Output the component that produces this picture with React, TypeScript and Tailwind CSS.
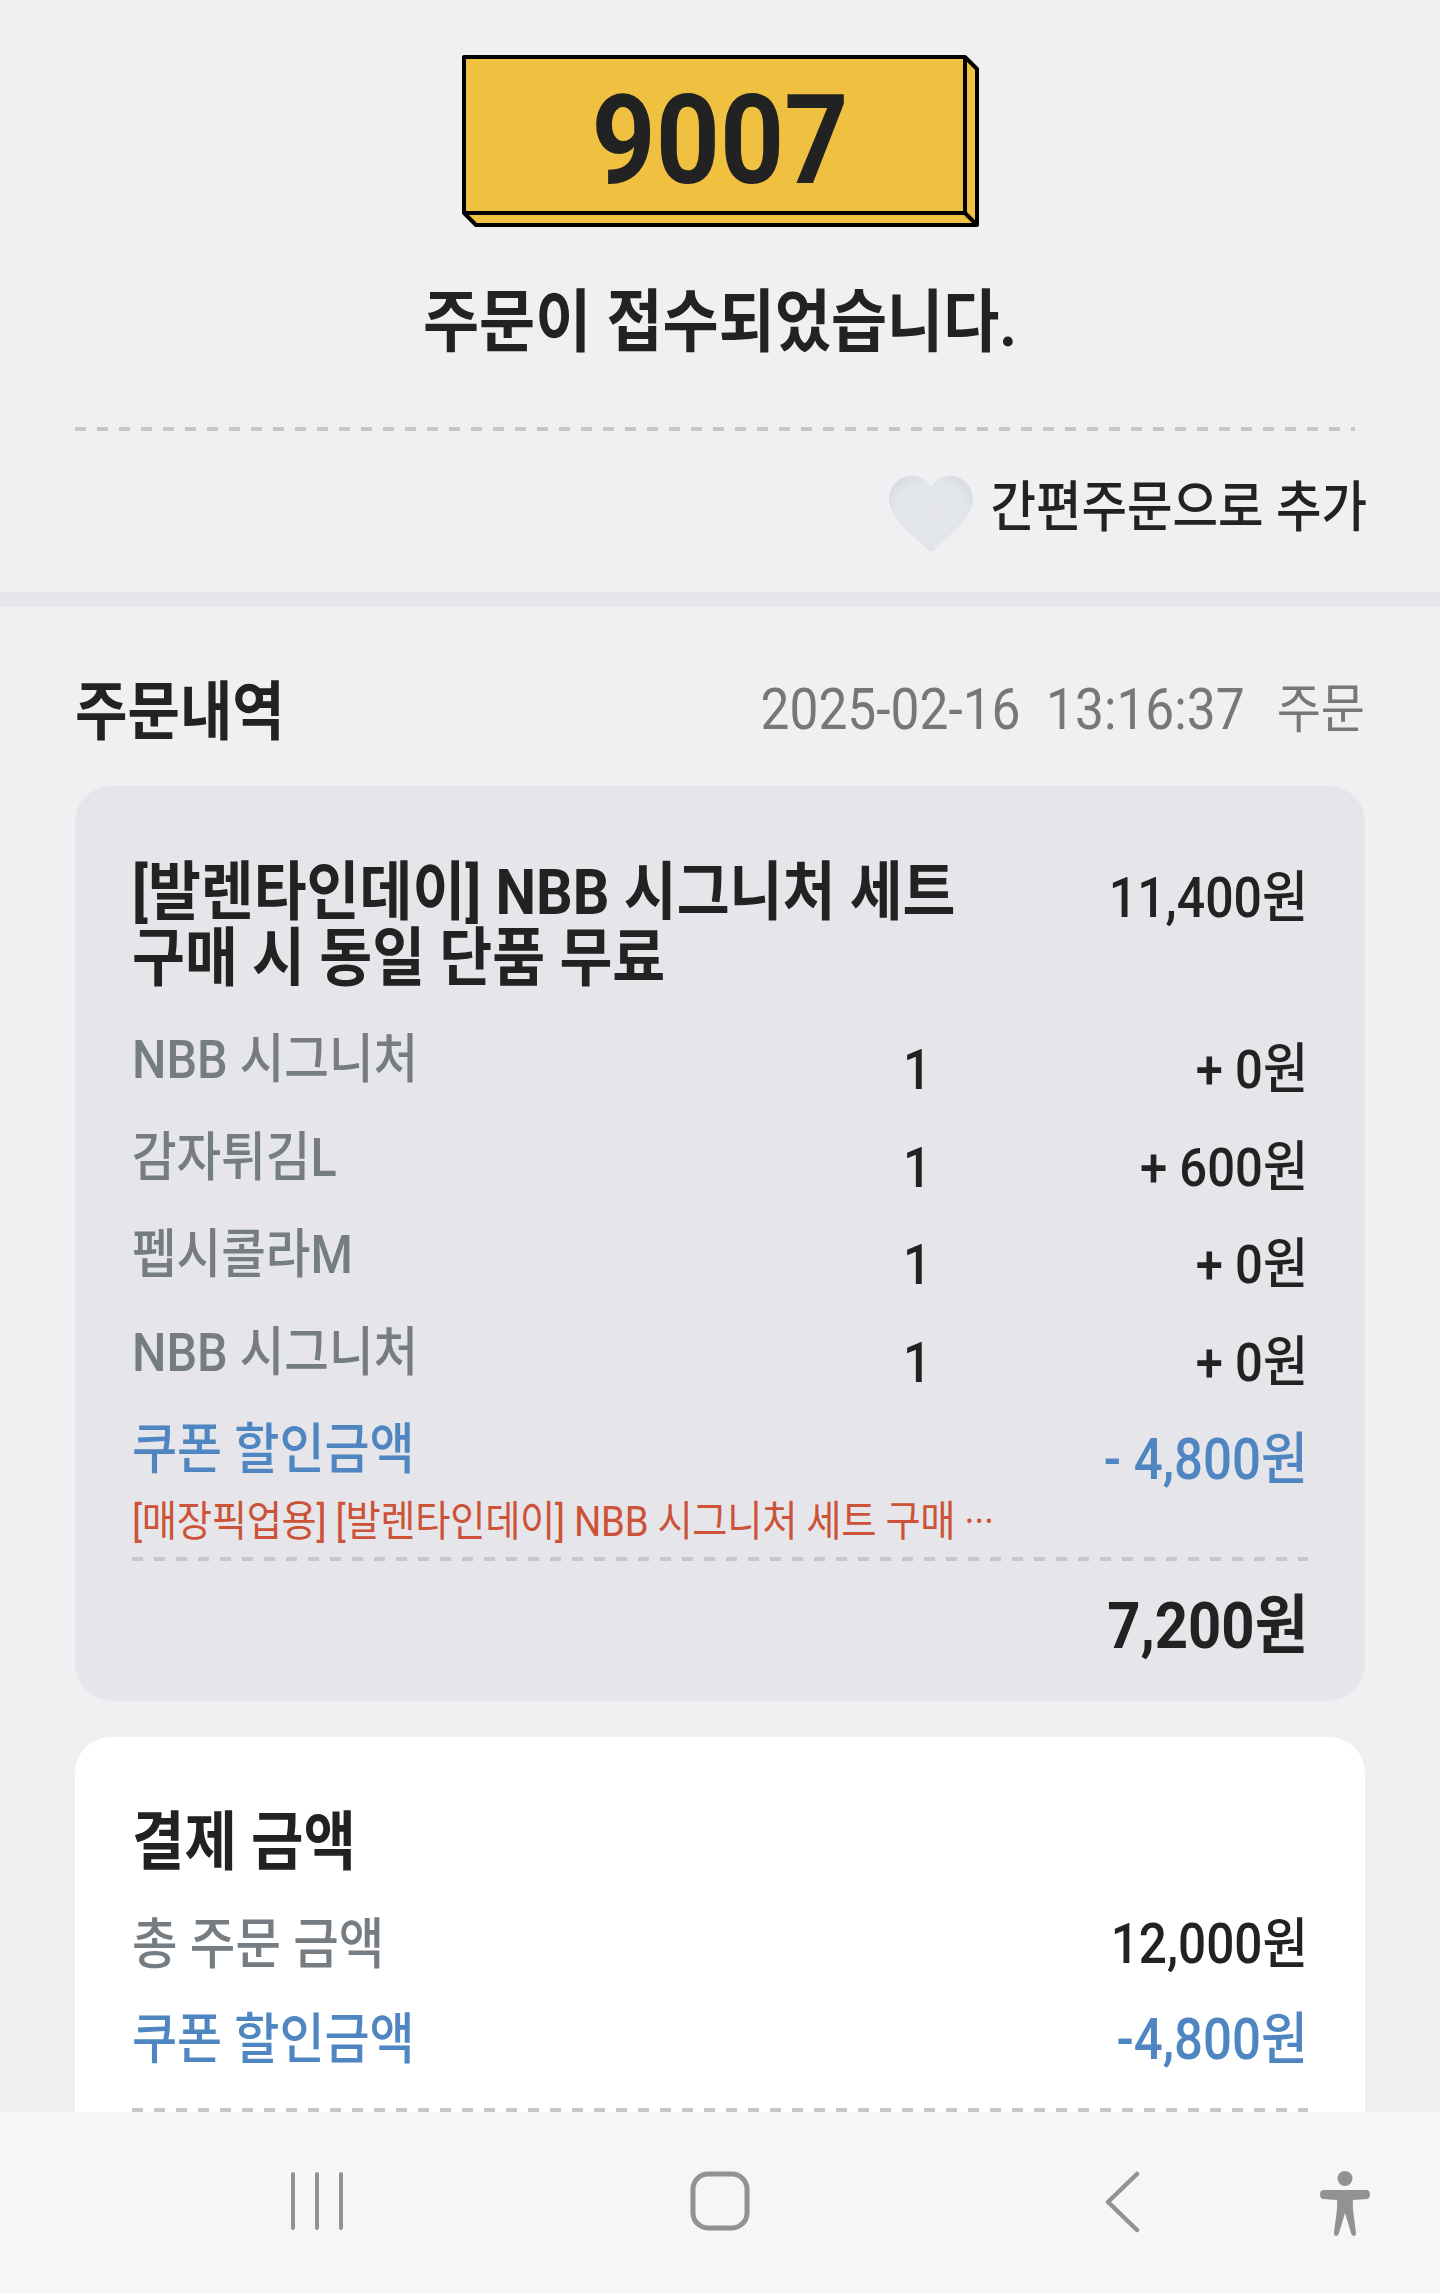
import React from 'react';

const tall = 'inline-block origin-center scale-y-[1.11] whitespace-nowrap';
const dashed = 'h-1 bg-[repeating-linear-gradient(90deg,#c6c6c6_0_11px,transparent_11px_22px)]';

const options = [
  { name: 'NBB 시그니처', qty: 1, price: '+ 0원' },
  { name: '감자튀김L', qty: 1, price: '+ 600원' },
  { name: '펩시콜라M', qty: 1, price: '+ 0원' },
  { name: 'NBB 시그니처', qty: 1, price: '+ 0원' },
];

const OptionRow: React.FC<{ name: string; qty: number; price: string }> = ({ name, qty, price }) => (
  <div className="flex h-[97.5px] items-start text-[49px] leading-[60px] font-medium">
    <span className={`${tall} w-[771px] text-[#757c82] text-[48.5px]`}>{name}</span>
    <span className={`${tall} mt-[10px] w-[60px] text-[#222] text-[50px]`}>{qty}</span>
    <span className={`${tall} mt-[10px] flex-1 text-right text-[#222]`}>{price}</span>
  </div>
);

const Plate = () => (
  <div className="relative mx-auto flex h-[172px] w-[517px] items-center">
    <svg className="absolute inset-0" width="517" height="172" viewBox="0 0 517 172" fill="none">
      <path d="M2 2H503L515 14V170H14L2 158Z" fill="#f0c040" stroke="#000" strokeWidth="4" strokeLinejoin="round" />
      <path d="M2 158H503V2M503 158L515 170" stroke="#000" strokeWidth="4" strokeLinejoin="round" />
    </svg>
    <div className="relative w-full text-center">
      <span className={`${tall} text-[112px] leading-[120px] font-bold text-[#222]`}>9007</span>
    </div>
  </div>
);

const Heart = () => (
  <svg width="84" height="76" viewBox="0 0 84 76">
    <defs>
      <radialGradient id="heartFill" cx="50%" cy="50%" r="62%">
        <stop offset="0%" stopColor="#e4e6eb" />
        <stop offset="70%" stopColor="#e2e5ea" />
        <stop offset="100%" stopColor="#d5d9e0" />
      </radialGradient>
    </defs>
    <path
      d="M42 75C40 75 38 73 36 71C22 58 1 42 0 24C0 10 10 0 23 0C31 0 38 4 42 11C46 4 53 0 61 0C74 0 84 10 84 24C83 42 62 58 48 71C46 73 44 75 42 75Z"
      fill="url(#heartFill)"
    />
  </svg>
);

const NavBar = () => (
  <div className="absolute inset-x-0 bottom-0 flex h-[181px] items-start bg-[#f6f6f8] pt-[59px] pl-[291px]">
    <svg width="52" height="60" viewBox="0 0 52 60" stroke="#929292" strokeWidth="4" strokeLinecap="round">
      <path d="M2 3V57M26 3V57M50 3V57" />
    </svg>
    <svg className="ml-[347px]" width="60" height="60" viewBox="0 0 60 60" fill="none" stroke="#929292" strokeWidth="5">
      <rect x="3" y="3" width="54" height="54" rx="15" />
    </svg>
    <svg className="ml-[354px]" width="36" height="62" viewBox="0 0 36 62" fill="none" stroke="#929292" strokeWidth="4.5" strokeLinecap="round" strokeLinejoin="round">
      <path d="M33 3L4 31L33 59" />
    </svg>
    <svg className="ml-[178px]" width="54" height="66" viewBox="0 0 54 66" fill="#929292">
      <ellipse cx="27" cy="7.5" rx="7.5" ry="7.5" />
      <path d="M5 19H49C53 19 53 28 49 28L35 29C34 36 37 52 38 62C38 66 34 66 33 62L27 42L21 62C20 66 16 66 16 62C17 52 20 36 19 29L5 28C1 28 1 19 5 19Z" />
    </svg>
  </div>
);

export default function App() {
  return (
    <div className="relative h-[2293px] w-[1440px] overflow-hidden bg-[#f0f0f3] text-[#222] font-['Roboto','Noto_Sans_CJK_KR',sans-serif]">
      <div className="px-[75px] pt-[55px]">
        <Plate />
        <div className="mt-[56px] h-[80px] text-center text-[61px] leading-[80px] font-bold">
          <span className={tall}>주문이 접수되었습니다.</span>
        </div>
        <div className={`${dashed} mt-[64px] mr-[10px]`} />
        <div className="mt-[43px] flex h-[80px] items-center justify-end">
          <Heart />
          <span className={`${tall} ml-[17px] mr-[-2px] mt-[-14px] text-[49.5px] leading-[60px] font-medium`}>간편주문으로 추가</span>
        </div>
      </div>

      <div className="mt-[38px] h-[15px] bg-[#e6e6ea]" />

      <div className="px-[75px] pt-[71px]">
        <div className="flex h-[70px] items-center justify-between">
          <span className={`${tall} text-[57px] leading-[60px] font-bold`}>주문내역</span>
          <div className="flex items-center text-[51.5px] leading-[60px] text-[#777] mt-[-7px]">
            <span className={tall}>2025-02-16&nbsp; 13:16:37</span>
            <span className={`${tall} ml-[32px] text-[48px]`}>주문</span>
          </div>
        </div>

        <div className="mt-[38px] h-[915px] rounded-[36px] bg-[#e6e6ea] px-[57px] pt-[74px]">
          <div className="flex h-[132px] items-start">
            <div className="w-[880px] pt-[5px] text-[57.5px] leading-[56px] font-bold">
              <div className={tall}>[발렌타인데이] NBB 시그니처 세트</div>
              <div className={`${tall} mt-[10px] block`}>구매 시 동일 단품 무료</div>
            </div>
            <span className={`${tall} mt-[3px] flex-1 text-right text-[50px] leading-[70px] font-medium`}>11,400원</span>
          </div>
          <div className="mt-[38px]">
            {options.map((o, i) => (
              <OptionRow key={i} {...o} />
            ))}
            <div className="flex items-start text-[49px] leading-[60px] font-medium text-[#4f86c1]">
              <span className={`${tall} flex-1`}>쿠폰 할인금액</span>
              <span className={`${tall} mt-[10px] text-[51px]`}>- 4,800원</span>
            </div>
          </div>
          <div className={`${tall} mt-[12px] text-[38.3px] leading-[40px] text-[#cc5238] tracking-[-0.3px]`}>[매장픽업용] [발렌타인데이] NBB 시그니처 세트 구매 ···</div>
          <div className={`${dashed} mt-[15px]`} />
          <div className="mt-[30px] text-right text-[58px] leading-[70px] font-bold">
            <span className={tall}>7,200원</span>
          </div>
        </div>

        <div className="mt-[36px] h-[500px] rounded-[36px] bg-white px-[57px] pt-[71px]">
          <div className={`${tall} text-[57px] leading-[70px] font-bold`}>결제 금액</div>
          <div className="mt-[36px] flex items-center justify-between text-[49.5px] leading-[60px] font-medium">
            <span className={`${tall} text-[#757c82]`}>총 주문 금액</span>
            <span className={tall}>12,000원</span>
          </div>
          <div className="mt-[36px] flex items-center justify-between text-[49px] leading-[60px] font-medium text-[#4f86c1]">
            <span className={tall}>쿠폰 할인금액</span>
            <span className={`${tall} text-[51px]`}>-4,800원</span>
          </div>
          <div className={`${dashed} mt-[38px]`} />
        </div>
      </div>

      <NavBar />
    </div>
  );
}
